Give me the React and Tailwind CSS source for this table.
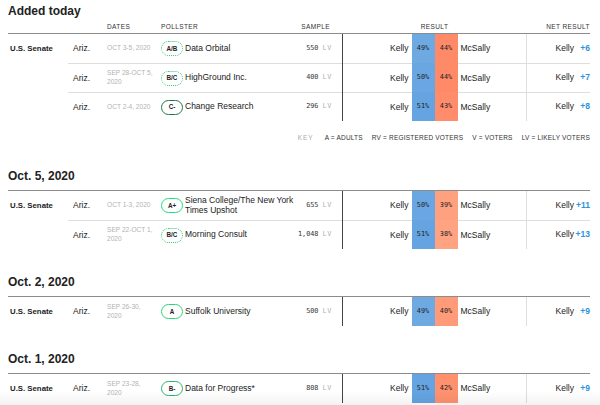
import React from "react";

const sans = { fontFamily: "'Liberation Sans', Arial, sans-serif" };

const sections = [
  {
    title: "Added today",
    header: true,
    rows: [
      { dates: "Oct 3-5, 2020", grade: "A/B", badge: "border-dotted border-[#34c878]", pollster: ["Data Orbital"], sample: "550", dem: "49%", rep: "44%", blue: "bg-[#6ea9e2]", red: "bg-[#ff8a68]", net: "+6" },
      { dates: "Sep 28-Oct 5, 2020", grade: "B/C", badge: "border-dotted border-[#34c878]", pollster: ["HighGround Inc."], sample: "400", dem: "50%", rep: "44%", blue: "bg-[#69a6e2]", red: "bg-[#ff8a68]", net: "+7" },
      { dates: "Oct 2-4, 2020", grade: "C-", badge: "border-solid border-[#1f7a4f]", pollster: ["Change Research"], sample: "296", dem: "51%", rep: "43%", blue: "bg-[#65a4e1]", red: "bg-[#ff8d6b]", net: "+8" },
    ],
  },
  {
    title: "Oct. 5, 2020",
    rows: [
      { dates: "Oct 1-3, 2020", grade: "A+", badge: "border-solid border-[#1fe07f]", pollster: ["Siena College/The New York", "Times Upshot"], sample: "655", dem: "50%", rep: "39%", blue: "bg-[#69a6e2]", red: "bg-[#ffa07e]", net: "+11" },
      { dates: "Sep 22-Oct 1, 2020", grade: "B/C", badge: "border-dotted border-[#34c878]", pollster: ["Morning Consult"], sample: "1,048", dem: "51%", rep: "38%", blue: "bg-[#65a4e1]", red: "bg-[#ffa383]", net: "+13" },
    ],
  },
  {
    title: "Oct. 2, 2020",
    rows: [
      { dates: "Sep 26-30, 2020", grade: "A", badge: "border-solid border-[#2bd67b]", pollster: ["Suffolk University"], sample: "500", dem: "49%", rep: "40%", blue: "bg-[#6ea9e2]", red: "bg-[#ff9b78]", net: "+9" },
    ],
  },
  {
    title: "Oct. 1, 2020",
    rows: [
      { dates: "Sep 23-28, 2020", grade: "B-", badge: "border-solid border-[#2cb56f]", pollster: ["Data for Progress*"], sample: "808", dem: "51%", rep: "42%", blue: "bg-[#65a4e1]", red: "bg-[#ff916f]", net: "+9" },
    ],
  },
];

const Row = ({ r, first }) => {
  const up = first ? "" : "-mt-px";
  return (
    <div className={`flex h-[29px] ${first ? "" : "border-t border-[#dedede]"}`}>
      <div className="w-[39px] shrink-0 flex items-center pl-[5px] text-[8.5px] text-[#222]">Ariz.</div>
      <div className="w-[54px] shrink-0 flex items-center pr-[5px] text-[6.6px] leading-[1.3] uppercase text-[#b3b3b3]">
        {r.dates}
      </div>
      <div className="flex-1 min-w-0 flex items-center gap-[2px]">
        <div className={`w-[22px] h-[15px] shrink-0 rounded-full border-[1.5px] ${r.badge} flex items-center justify-center text-[6.3px] font-bold text-[#222]`}>
          {r.grade}
        </div>
        <div className="flex flex-col text-[8.5px] leading-[1.15] text-[#222] whitespace-nowrap">
          {r.pollster.map((line, i) => (
            <span key={i}>{line}</span>
          ))}
        </div>
      </div>
      <div className={`w-[52px] shrink-0 ${up} flex items-center justify-end pr-[10px] border-r border-[#444] font-['DejaVu_Sans_Mono',monospace] text-[6.8px]`}>
        <span className="text-[#333]">{r.sample}</span>
        <span className="ml-[4px] text-[#b0b0b0] tracking-[0.1em]">LV</span>
      </div>
      <div className="w-[183px] shrink-0 flex">
        <div className="flex-1 flex items-center justify-end pr-[3px] text-[8.5px] text-[#222]">Kelly</div>
        <div className={`w-[23px] ${up} ${r.blue} flex items-center justify-center font-['DejaVu_Sans_Mono',monospace] text-[6.8px] text-[#222]`}>
          {r.dem}
        </div>
        <div className={`w-[23px] ${up} ${r.red} flex items-center justify-center font-['DejaVu_Sans_Mono',monospace] text-[6.8px] text-[#222]`}>
          {r.rep}
        </div>
        <div className="flex-1 flex items-center pl-[3px] text-[8.5px] text-[#222]">McSally</div>
      </div>
      <div className={`w-[64px] shrink-0 ${up} border-l border-[#dedede] flex items-center justify-end`}>
        <span className="text-[8.5px] text-[#222]">Kelly</span>
        <span className="w-[16px] text-right text-[8.5px] font-bold text-[#2a93e0]">{r.net}</span>
      </div>
    </div>
  );
};

const Section = ({ s, idx }) => (
  <div className={idx === 0 ? "pt-[2px]" : "mt-[24px]"}>
    {s.header ? (
      <>
        <h2 className="h-[19px] text-[12px] leading-[19px] font-bold text-[#222]">{s.title}</h2>
        <div className="h-[13px] flex items-end pb-[2px] border-b border-[#8c8c8c] text-[6.5px] leading-[8px] uppercase tracking-[0.06em] text-[#333]">
          <div className="w-[99px]" />
          <div className="w-[54px]">Dates</div>
          <div className="flex-1">Pollster</div>
          <div className="w-[52px] text-right pr-[13px]">Sample</div>
          <div className="w-[183px] text-center">Result</div>
          <div className="w-[64px] text-right">Net result</div>
        </div>
      </>
    ) : (
      <div className="h-[24px] border-b border-[#8c8c8c]">
        <h2 className="text-[12px] leading-[19px] font-bold text-[#222]">{s.title}</h2>
      </div>
    )}
    <div className="flex">
      <div className="w-[60px] shrink-0 h-[29px] flex items-center pl-[2px] text-[7.8px] font-bold text-[#222]">U.S. Senate</div>
      <div className="flex-1 min-w-0 flex flex-col">
        {s.rows.map((r, i) => (
          <Row key={i} r={r} first={i === 0} />
        ))}
      </div>
    </div>
    {s.header && (
      <div className="mt-[12px] h-[10px] flex items-center justify-end gap-[9px] text-[6.5px] uppercase tracking-[0.03em] text-[#333]">
        <span className="text-[#aaa] tracking-[0.15em] mr-[2px]">Key</span>
        <span>A = Adults</span>
        <span>RV = Registered voters</span>
        <span>V = Voters</span>
        <span>LV = Likely voters</span>
      </div>
    )}
  </div>
);

export default function App() {
  return (
    <div className="w-[600px] h-[405px] overflow-hidden bg-white pl-[8px] pr-[10px] relative" style={sans}>
      {sections.map((s, i) => (
        <Section key={i} s={s} idx={i} />
      ))}
      <div className="absolute left-0 right-0 bottom-0 h-[14px] bg-gradient-to-b from-transparent to-black/5 pointer-events-none" />
    </div>
  );
}
